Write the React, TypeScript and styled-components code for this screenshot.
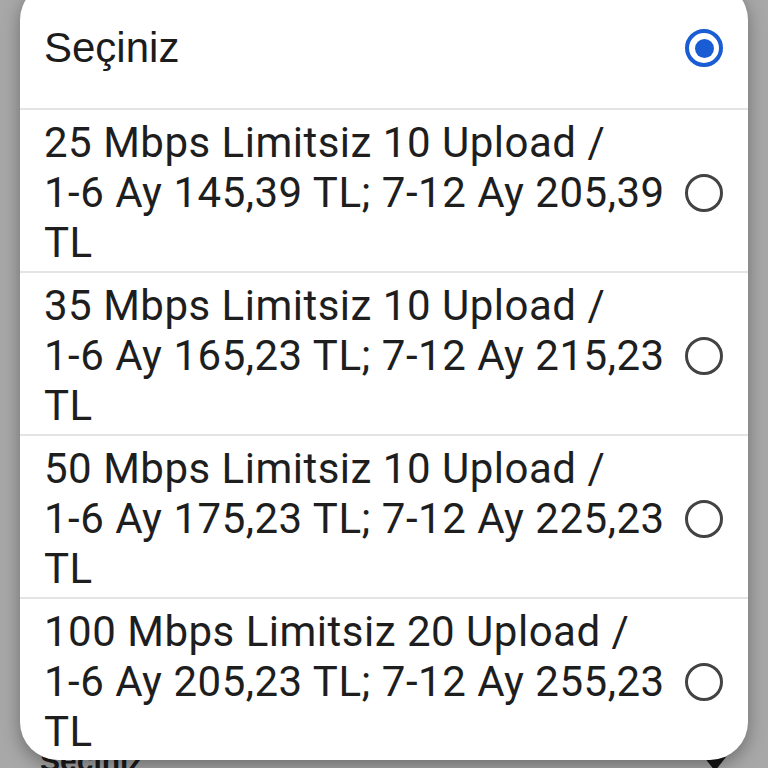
import React from 'react'
import styled, { createGlobalStyle } from 'styled-components'

const GlobalStyle = createGlobalStyle`
  html, body {
    margin: 0;
    padding: 0;
    height: 100%;
    overflow: hidden;
    background: #ffffff;
  }
  #root {
    height: 100%;
  }
`

const options = [
  '25 Mbps Limitsiz 10 Upload / 1-6 Ay 145,39 TL; 7-12 Ay 205,39 TL',
  '35 Mbps Limitsiz 10 Upload / 1-6 Ay 165,23 TL; 7-12 Ay 215,23 TL',
  '50 Mbps Limitsiz 10 Upload / 1-6 Ay 175,23 TL; 7-12 Ay 225,23 TL',
  '100 Mbps Limitsiz 20 Upload / 1-6 Ay 205,23 TL; 7-12 Ay 255,23 TL',
]

const Page = styled.div`
  position: relative;
  height: 100%;
  background: #ffffff;
`

const Form = styled.div`
  display: flex;
  flex-direction: column;
  padding: 744px 40px 0 40px;
`

const SelectField = styled.div`
  display: flex;
  align-items: center;
  justify-content: space-between;
  padding-right: 2px;
`

const SelectValue = styled.span`
  font-family: 'Liberation Sans', Arial, sans-serif;
  font-weight: bold;
  font-size: 30px;
  color: #2a2a2a;
`

const Caret = styled.span`
  width: 0;
  height: 0;
  border-left: 11px solid transparent;
  border-right: 11px solid transparent;
  border-top: 14px solid #222;
  margin-top: 6px;
`

const Scrim = styled.div`
  position: absolute;
  inset: 0;
  background: rgba(0, 0, 0, 0.34);
`

const Dialog = styled.div`
  position: absolute;
  left: 20px;
  right: 20px;
  top: -18px;
  background: #ffffff;
  border-radius: 38px;
  box-shadow: 0 6px 18px rgba(0, 0, 0, 0.35);
  overflow: hidden;
`

const Header = styled.div`
  display: flex;
  align-items: center;
  justify-content: space-between;
  height: 128px;
  box-sizing: border-box;
  padding: 6px 25px 0 24px;
  border-bottom: 2px solid #e4e4e4;
`

const HeaderText = styled.span`
  font-family: 'Liberation Sans', Arial, sans-serif;
  font-size: 42px;
  color: #1c1c1c;
`

const OptionRow = styled.div<{ last?: boolean }>`
  display: flex;
  align-items: center;
  justify-content: space-between;
  padding: 8px 25px 3px 24px;
  border-bottom: ${(p) => (p.last ? 'none' : '2px solid #e4e4e4')};
`

const OptionText = styled.span`
  width: 630px;
  font-family: Roboto, 'Noto Sans', sans-serif;
  font-size: 42px;
  line-height: 50px;
  letter-spacing: 0.5px;
  color: #1e1e1e;
`

// keeps "1-6" / "7-12" from splitting at the hyphen
const Word = styled.span`
  white-space: nowrap;
`

const Radio = styled.span<{ checked?: boolean }>`
  flex: none;
  width: 38px;
  height: 38px;
  box-sizing: border-box;
  border-radius: 50%;
  border: ${(p) => (p.checked ? '4px solid #1a5cd4' : '3.5px solid #434343')};
  display: flex;
  align-items: center;
  justify-content: center;
  &::after {
    content: '';
    display: ${(p) => (p.checked ? 'block' : 'none')};
    width: 19px;
    height: 19px;
    border-radius: 50%;
    background: #1a5cd4;
  }
`

const renderLabel = (text: string) =>
  text.split(' ').map((w, i) => (
    <React.Fragment key={i}>
      {i > 0 && ' '}
      {w.includes('-') ? <Word>{w}</Word> : w}
    </React.Fragment>
  ))

export default function App() {
  return (
    <>
      <GlobalStyle />
      <Page>
        <Form>
          <SelectField>
            <SelectValue>Seçiniz</SelectValue>
            <Caret />
          </SelectField>
        </Form>
        <Scrim />
        <Dialog>
          <Header>
            <HeaderText>Seçiniz</HeaderText>
            <Radio checked />
          </Header>
          {options.map((o, i) => (
            <OptionRow key={o} last={i === options.length - 1}>
              <OptionText>{renderLabel(o)}</OptionText>
              <Radio />
            </OptionRow>
          ))}
        </Dialog>
      </Page>
    </>
  )
}
